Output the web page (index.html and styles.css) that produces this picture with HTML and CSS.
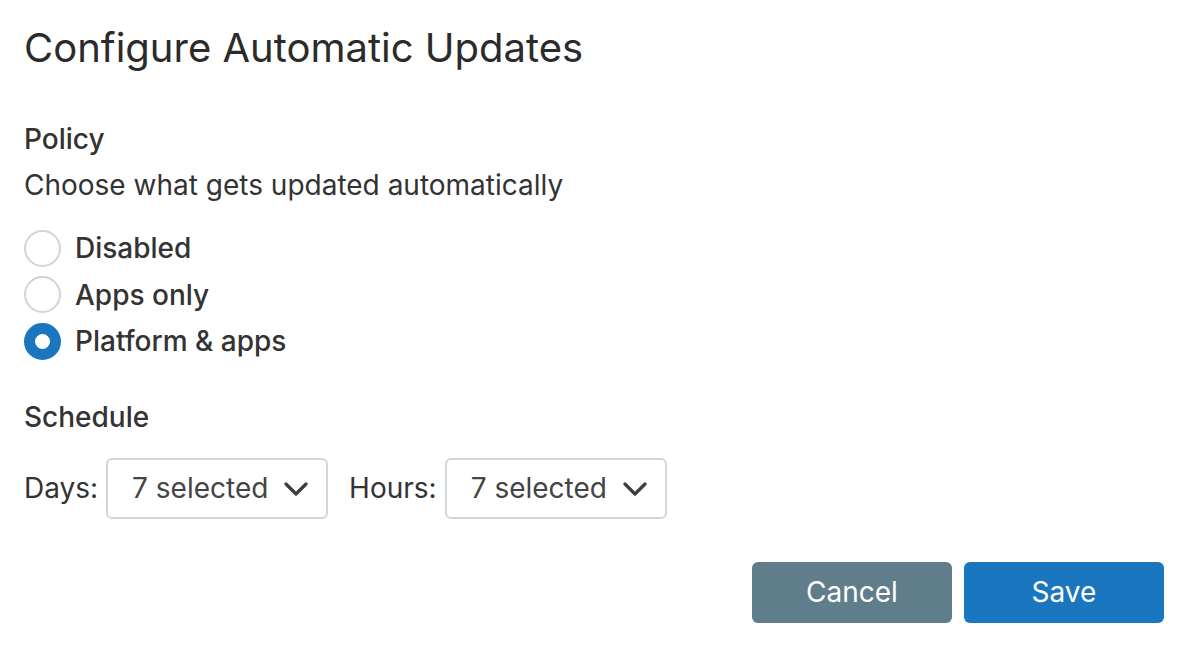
FILE: index.html
```html
<!DOCTYPE html>
<html>
<head>
<meta charset="utf-8">
<link rel="stylesheet" href="styles.css">
</head>
<body>
<div class="dialog">
  <h1 class="title">Configure Automatic Updates</h1>
  <section class="policy">
    <div class="label">Policy</div>
    <div class="desc">Choose what gets updated automatically</div>
    <div class="radios">
      <label class="radio"><span class="circle"></span><span>Disabled</span></label>
      <label class="radio"><span class="circle"></span><span>Apps only</span></label>
      <label class="radio"><span class="circle checked"></span><span>Platform &amp; apps</span></label>
    </div>
  </section>
  <section class="schedule">
    <div class="label">Schedule</div>
    <div class="fields">
      <span class="field-label">Days:</span>
      <div class="select"><span>7 selected</span><svg class="chev" viewBox="0 0 24 14" width="24" height="14"><path d="M2 2l10 10 10-10" fill="none" stroke="#3d3d3d" stroke-width="3.2" stroke-linecap="round" stroke-linejoin="round"/></svg></div>
      <span class="field-label hours">Hours:</span>
      <div class="select"><span>7 selected</span><svg class="chev" viewBox="0 0 24 14" width="24" height="14"><path d="M2 2l10 10 10-10" fill="none" stroke="#3d3d3d" stroke-width="3.2" stroke-linecap="round" stroke-linejoin="round"/></svg></div>
    </div>
  </section>
  <div class="actions">
    <button class="btn cancel">Cancel</button>
    <button class="btn save">Save</button>
  </div>
</div>
</body>
</html>
```
FILE: styles.css
```css
html, body {
  margin: 0;
  padding: 0;
  background: #fff;
}
body {
  font-family: Inter, "Noto Sans", sans-serif;
  color: #333;
}
.dialog {
  padding: 20px 17px 0 24px;
}
.title {
  margin: 0;
  font-size: 40px;
  font-weight: 400;
  line-height: 56px;
  color: #2b2b2b;
}
.policy {
  margin-top: 46px;
}
.label {
  font-size: 28px;
  font-weight: 500;
  line-height: 34px;
}
.desc {
  margin-top: 12px;
  font-size: 28px;
  line-height: 34px;
}
.radios {
  margin-top: 23px;
  display: flex;
  flex-direction: column;
}
.radio {
  display: flex;
  align-items: center;
  gap: 14px;
  height: 46.5px;
  font-size: 28px;
  font-weight: 500;
}
.circle {
  box-sizing: border-box;
  width: 37px;
  height: 37px;
  border-radius: 50%;
  border: 2px solid #d0d4d9;
  background: #fff;
}
.circle.checked {
  border: 11.5px solid #1b76c0;
}
.schedule {
  margin-top: 35px;
}
.fields {
  margin-top: 24px;
  display: flex;
  align-items: center;
  font-size: 28px;
}
.field-label {
  margin-right: 8px;
}
.field-label.hours {
  margin-left: 21px;
}
.select {
  box-sizing: border-box;
  width: 222px;
  height: 61px;
  border: 2px solid #d3d6d9;
  border-radius: 6px;
  display: flex;
  align-items: center;
  padding-left: 24px;
  gap: 16px;
  color: #444;
}
.chev {
  margin-top: 2px;
}
.actions {
  margin-top: 43px;
  display: flex;
  justify-content: flex-end;
  gap: 12px;
}
.btn {
  width: 200px;
  height: 61px;
  border: none;
  border-radius: 6px;
  color: #fff;
  font-family: Inter, "Noto Sans", sans-serif;
  font-size: 28px;
}
.cancel { background: #607d8b; }
.save { background: #1b76c0; }
```
